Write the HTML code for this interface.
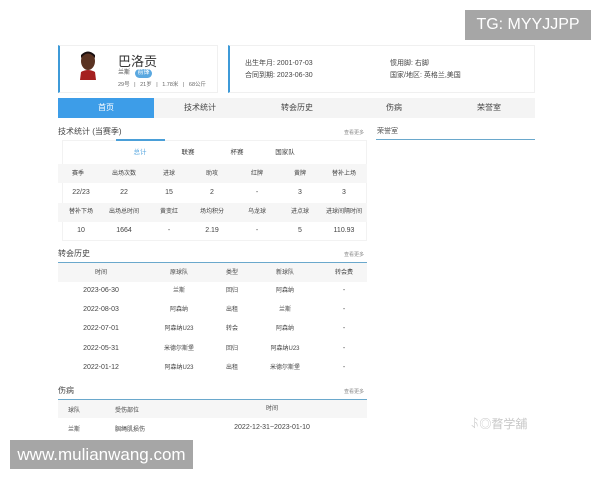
<!DOCTYPE html>
<html><head><meta charset="utf-8"><style>
*{margin:0;padding:0;box-sizing:border-box}
body{width:600px;height:480px;background:#fff;position:relative;overflow:hidden;font-family:"Liberation Sans","Noto Sans CJK SC",sans-serif;color:#333}
.a{position:absolute;white-space:nowrap}
.c{position:absolute;transform:translateX(-50%);white-space:nowrap;font-size:7px;color:#444;height:10px;line-height:10px}
.card{position:absolute;border:1px solid #f0f0f0;border-left:2px solid #3d9ad8;background:#fff}
.gray{position:absolute;background:#f6f6f6}
.t{font-size:8px;color:#444}
.more{font-size:5px;color:#888}
</style></head><body>
<div class="a" style="left:465px;top:10px;width:126px;height:30px;background:#a6a6a6;color:#fff;font-size:16px;line-height:30px;text-align:center">TG: MYYJJPP</div>

<div class="card" style="left:58px;top:45px;width:160px;height:48px"></div>
<svg class="a" style="left:79px;top:50px" width="18" height="30"><ellipse cx="9" cy="11" rx="7" ry="9" fill="#5a3322"/><path d="M2 8 Q9 -1 16 8 L16 5 Q9 -2 2 5Z" fill="#1a1010"/><path d="M1 30 L2 22 Q9 18 16 22 L17 30Z" fill="#a52020"/></svg>
<div class="a" style="left:118px;top:51px;font-size:13px;color:#333">巴洛贡</div>
<div class="a" style="left:118px;top:69px;font-size:6px;color:#444;line-height:8px">兰斯</div>
<div class="a" style="left:135px;top:69px;width:17px;height:9px;border-radius:5px;background:#5aa8e0;color:#fff;font-size:6px;line-height:9px;text-align:center">前锋</div>
<div class="a" style="left:118px;top:80px;font-size:5.5px;color:#666;word-spacing:3px">29号 | 21岁 | 1.78米 | 68公斤</div>

<div class="card" style="left:228px;top:45px;width:307px;height:48px"></div>
<div class="a t" style="left:245px;top:58px;font-size:7px">出生年月: 2001-07-03</div>
<div class="a t" style="left:245px;top:70px;font-size:7px">合同到期: 2023-06-30</div>
<div class="a t" style="left:390px;top:58px;font-size:7px">惯用脚: 右脚</div>
<div class="a t" style="left:390px;top:70px;font-size:7px">国家/地区: 英格兰,美国</div>

<div class="gray" style="left:58px;top:98px;width:477px;height:20px;background:#f4f4f4"></div>
<div class="a" style="left:58px;top:98px;width:96px;height:20px;background:#3d9de8"></div>
<div class="c" style="left:106px;top:103px;font-size:8px;color:#fff">首页</div>
<div class="c" style="left:200px;top:103px;font-size:8px">技术统计</div>
<div class="c" style="left:297px;top:103px;font-size:8px">转会历史</div>
<div class="c" style="left:394px;top:103px;font-size:8px">伤病</div>
<div class="c" style="left:489px;top:103px;font-size:8px">荣誉室</div>

<div class="a t" style="left:58px;top:126px">技术统计 (当赛季)</div>
<div class="a more" style="left:344px;top:129px">查看更多</div>
<div class="a t" style="left:377px;top:126px;font-size:7px;color:#555">荣誉室</div>
<div class="a" style="left:376px;top:139px;width:159px;height:1px;background:#6aa8cc"></div>

<div class="a" style="left:62px;top:140px;width:305px;height:101px;border:1px solid #f2f2f2"></div>
<div class="a" style="left:116px;top:139px;width:49px;height:2px;background:#4a9fd8"></div>
<div class="c" style="left:140px;top:148px;color:#5aa8e0;font-size:6.5px">总计</div>
<div class="c" style="left:188px;top:148px;font-size:6.5px">联赛</div>
<div class="c" style="left:237px;top:148px;font-size:6.5px">杯赛</div>
<div class="c" style="left:285px;top:148px;font-size:6.5px">国家队</div>

<div class="gray" style="left:58px;top:164px;width:309px;height:19px"></div>
<div class="gray" style="left:58px;top:203px;width:309px;height:19px"></div>
<div class="c" style="left:78px;top:169px;font-size:6px">赛季</div><div class="c" style="left:124px;top:169px;font-size:6px">出场次数</div><div class="c" style="left:169px;top:169px;font-size:6px">进球</div><div class="c" style="left:212px;top:169px;font-size:6px">助攻</div><div class="c" style="left:257px;top:169px;font-size:6px">红牌</div><div class="c" style="left:300px;top:169px;font-size:6px">黄牌</div><div class="c" style="left:344px;top:169px;font-size:6px">替补上场</div>
<div class="c" style="left:81px;top:188px">22/23</div><div class="c" style="left:124px;top:188px">22</div><div class="c" style="left:169px;top:188px">15</div><div class="c" style="left:212px;top:188px">2</div><div class="c" style="left:257px;top:188px">-</div><div class="c" style="left:300px;top:188px">3</div><div class="c" style="left:344px;top:188px">3</div>
<div class="c" style="left:81px;top:207px;font-size:6px">替补下场</div><div class="c" style="left:124px;top:207px;font-size:6px">出场总时间</div><div class="c" style="left:169px;top:207px;font-size:6px">黄变红</div><div class="c" style="left:212px;top:207px;font-size:6px">场均积分</div><div class="c" style="left:257px;top:207px;font-size:6px">乌龙球</div><div class="c" style="left:300px;top:207px;font-size:6px">进点球</div><div class="c" style="left:344px;top:207px;font-size:6px">进球间隔时间</div>
<div class="c" style="left:81px;top:226px">10</div><div class="c" style="left:124px;top:226px">1664</div><div class="c" style="left:169px;top:226px">-</div><div class="c" style="left:212px;top:226px">2.19</div><div class="c" style="left:257px;top:226px">-</div><div class="c" style="left:300px;top:226px">5</div><div class="c" style="left:344px;top:226px">110.93</div>

<div class="a t" style="left:58px;top:248px">转会历史</div>
<div class="a more" style="left:344px;top:251px">查看更多</div>
<div class="a" style="left:58px;top:262px;width:309px;height:1px;background:#6aa8cc"></div>
<div class="gray" style="left:58px;top:263px;width:309px;height:19px"></div>
<div class="c" style="left:101px;top:268px;font-size:6px">时间</div><div class="c" style="left:179px;top:268px;font-size:6px">原球队</div><div class="c" style="left:232px;top:268px;font-size:6px">类型</div><div class="c" style="left:285px;top:268px;font-size:6px">新球队</div><div class="c" style="left:344px;top:268px;font-size:6px">转会费</div>

<div class="c" style="left:101px;top:286px">2023-06-30</div><div class="c" style="left:179px;top:286px;font-size:6px">兰斯</div><div class="c" style="left:232px;top:286px;font-size:6px">回归</div><div class="c" style="left:285px;top:286px;font-size:6px">阿森纳</div><div class="c" style="left:344px;top:286px">-</div>
<div class="c" style="left:101px;top:305px">2022-08-03</div><div class="c" style="left:179px;top:305px;font-size:6px">阿森纳</div><div class="c" style="left:232px;top:305px;font-size:6px">出租</div><div class="c" style="left:285px;top:305px;font-size:6px">兰斯</div><div class="c" style="left:344px;top:305px">-</div>
<div class="c" style="left:101px;top:324px">2022-07-01</div><div class="c" style="left:179px;top:324px;font-size:6px">阿森纳U23</div><div class="c" style="left:232px;top:324px;font-size:6px">转会</div><div class="c" style="left:285px;top:324px;font-size:6px">阿森纳</div><div class="c" style="left:344px;top:324px">-</div>
<div class="c" style="left:101px;top:344px">2022-05-31</div><div class="c" style="left:179px;top:344px;font-size:6px">米德尔斯堡</div><div class="c" style="left:232px;top:344px;font-size:6px">回归</div><div class="c" style="left:285px;top:344px;font-size:6px">阿森纳U23</div><div class="c" style="left:344px;top:344px">-</div>
<div class="c" style="left:101px;top:363px">2022-01-12</div><div class="c" style="left:179px;top:363px;font-size:6px">阿森纳U23</div><div class="c" style="left:232px;top:363px;font-size:6px">出租</div><div class="c" style="left:285px;top:363px;font-size:6px">米德尔斯堡</div><div class="c" style="left:344px;top:363px">-</div>

<div class="a t" style="left:58px;top:385px">伤病</div>
<div class="a more" style="left:344px;top:388px">查看更多</div>
<div class="a" style="left:58px;top:399px;width:309px;height:1px;background:#6aa8cc"></div>
<div class="gray" style="left:58px;top:400px;width:309px;height:18px"></div>
<div class="a" style="left:68px;top:405px;font-size:6px;color:#444">球队</div>
<div class="a" style="left:115px;top:405px;font-size:6px;color:#444">受伤部位</div>
<div class="c" style="left:272px;top:404px;font-size:6px">时间</div>
<div class="a" style="left:68px;top:424px;font-size:6px;color:#444">兰斯</div>
<div class="a" style="left:115px;top:424px;font-size:6px;color:#444">腘绳肌损伤</div>
<div class="c" style="left:272px;top:423px">2022-12-31~2023-01-10</div>

<div class="a" style="left:470px;top:415px;font-size:12px;color:#c8c8c8">ꌺ◎瞀学舖</div>
<div class="a" style="left:10px;top:440px;width:183px;height:29px;background:#a6a6a6;color:#fff;font-size:17px;line-height:29px;text-align:center">www.mulianwang.com</div>
</body></html>
